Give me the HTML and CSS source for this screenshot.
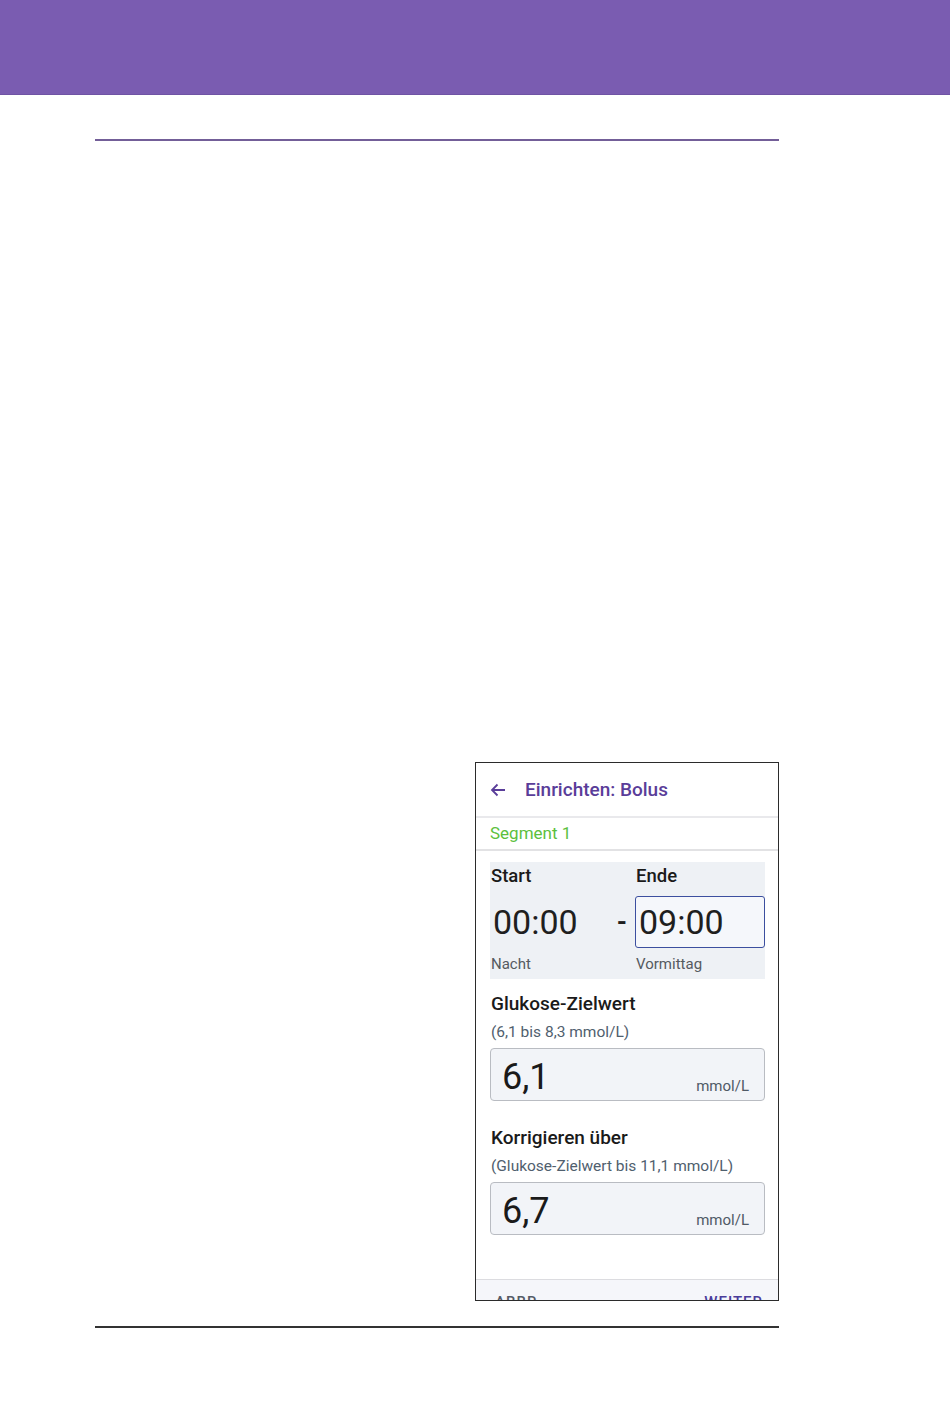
FILE: index.html
```html
<!DOCTYPE html>
<html lang="de">
<head>
    <meta charset="UTF-8">
    <meta name="viewport" content="width=device-width, initial-scale=1.0">
    <title>Einrichten: Bolus</title>
    <link rel="stylesheet" href="styles.css">
</head>
<body>
    <header class="top-band"></header>
    <main class="page">
        <hr class="rule-top">
        <section class="figure-area">
            <div class="phone">
                <div class="app-bar">
                    <svg class="back-icon" width="16" height="14" viewBox="0 0 16 14">
                        <path d="M15 7H2M7.5 1.5L2 7l5.5 5.5" fill="none" stroke="#5a3d99" stroke-width="1.8"/>
                    </svg>
                    <span class="app-title">Einrichten: Bolus</span>
                </div>
                <div class="segment">Segment 1</div>
                <div class="content">
                    <div class="time-box">
                        <div class="time-col start-col">
                            <div class="time-label">Start</div>
                            <div class="time-row">
                                <span class="time-value">00:00</span>
                                <span class="dash">-</span>
                            </div>
                            <div class="time-sub">Nacht</div>
                        </div>
                        <div class="time-col end-col">
                            <div class="time-label">Ende</div>
                            <div class="time-input">09:00</div>
                            <div class="time-sub">Vormittag</div>
                        </div>
                    </div>

                    <div class="field">
                        <div class="field-title">Glukose-Zielwert</div>
                        <div class="field-hint">(6,1 bis 8,3 mmol/L)</div>
                        <div class="value-box">
                            <span class="big-value">6,1</span>
                            <span class="unit">mmol/L</span>
                        </div>
                    </div>

                    <div class="field field-second">
                        <div class="field-title">Korrigieren über</div>
                        <div class="field-hint">(Glukose-Zielwert bis 11,1 mmol/L)</div>
                        <div class="value-box">
                            <span class="big-value">6,7</span>
                            <span class="unit">mmol/L</span>
                        </div>
                    </div>
                </div>
                <div class="app-footer">
                    <span class="btn-text">ABBR</span>
                    <span class="btn-text btn-next">WEITER</span>
                </div>
            </div>
        </section>
        <hr class="rule-bottom">
    </main>
</body>
</html>
```

FILE: styles.css
```css
body {
    margin: 0;
    padding: 0;
    background-color: #ffffff;
    font-family: Roboto, "Noto Sans", Arial, sans-serif;
    color: #1a1a1a;
}
.top-band {
    height: 95px;
    background-color: #7a5cb1;
    border-bottom: 1px solid #6f53a4;
    box-sizing: border-box;
}
.page {
    margin-left: 95px;
    width: 684px;
}
hr {
    margin: 0;
    border: none;
}
.rule-top {
    margin-top: 44px;
    height: 2px;
    background-color: #735e98;
}
.figure-area {
    display: flex;
    justify-content: flex-end;
    padding-top: 621px;
}
.rule-bottom {
    margin-top: 25px;
    height: 2px;
    background-color: #333333;
}

/* phone screenshot */
.phone {
    width: 304px;
    height: 539px;
    border: 1px solid #2b2b2b;
    box-sizing: border-box;
    overflow: hidden;
    display: flex;
    flex-direction: column;
    background-color: #ffffff;
}
.app-bar {
    height: 53px;
    display: flex;
    align-items: center;
    padding-left: 14px;
    gap: 19px;
    border-bottom: 2px solid #e9e9ec;
    flex-shrink: 0;
}
.app-title {
    color: #5a3d99;
    font-size: 19px;
    font-weight: 500;
}
.segment {
    height: 31px;
    line-height: 31px;
    padding-left: 14px;
    color: #5cbf3d;
    font-size: 17px;
    border-bottom: 2px solid #e2e2e4;
    flex-shrink: 0;
}
.content {
    padding: 11px 13px 0 14px;
    flex: 1;
}
.time-box {
    display: flex;
    background-color: #eef1f5;
    height: 117px;
    box-sizing: border-box;
    padding-top: 4px;
}
.time-col {
    display: flex;
    flex-direction: column;
}
.start-col {
    width: 145px;
}
.end-col {
    flex: 1;
}
.time-label {
    height: 20px;
    line-height: 20px;
    font-size: 18.5px;
    font-weight: 500;
    color: #1a1a1a;
    padding-left: 1px;
    margin-bottom: 10px;
}
.time-row {
    height: 52px;
    display: flex;
    align-items: center;
    justify-content: space-between;
    padding-left: 3px;
    padding-right: 8px;
}
.time-value {
    font-size: 34px;
    color: #1f1f1f;
}
.dash {
    font-size: 26px;
    font-weight: 700;
    color: #1f1f1f;
}
.time-input {
    height: 52px;
    box-sizing: border-box;
    border: 1px solid #3c4f9f;
    border-radius: 3px;
    background-color: #f5f7fb;
    display: flex;
    align-items: center;
    padding-left: 3px;
    font-size: 34px;
    color: #1f1f1f;
}
.time-sub {
    margin-top: 7px;
    font-size: 15px;
    color: #555a60;
    padding-left: 1px;
}
.field {
    margin-top: 14px;
}
.field-second {
    margin-top: 26px;
}
.field-title {
    font-size: 19px;
    font-weight: 500;
    color: #1a1a1a;
    padding-left: 1px;
    line-height: 22px;
}
.field-hint {
    margin-top: 8px;
    font-size: 15.5px;
    color: #50606e;
    padding-left: 1px;
    line-height: 18px;
}
.value-box {
    margin-top: 7px;
    height: 53px;
    box-sizing: border-box;
    border: 1px solid #b9bcc2;
    border-radius: 4px;
    background-color: #f2f4f8;
    display: flex;
    align-items: flex-end;
    justify-content: space-between;
    padding: 0 15px 4px 11px;
}
.big-value {
    font-size: 36px;
    line-height: 38px;
    color: #1a1a1a;
}
.unit {
    font-size: 15px;
    color: #505a66;
    line-height: 20px;
}
.app-footer {
    height: 21px;
    box-sizing: border-box;
    border-top: 1px solid #dcdce0;
    background-color: #f5f6fa;
    display: flex;
    align-items: flex-start;
    justify-content: space-between;
    padding: 15px 15px 0 19px;
    flex-shrink: 0;
}
.btn-text {
    font-size: 15px;
    font-weight: 500;
    color: #555b66;
    letter-spacing: 1px;
    line-height: 15px;
}
.btn-next {
    color: #4b3c9a;
}
```
